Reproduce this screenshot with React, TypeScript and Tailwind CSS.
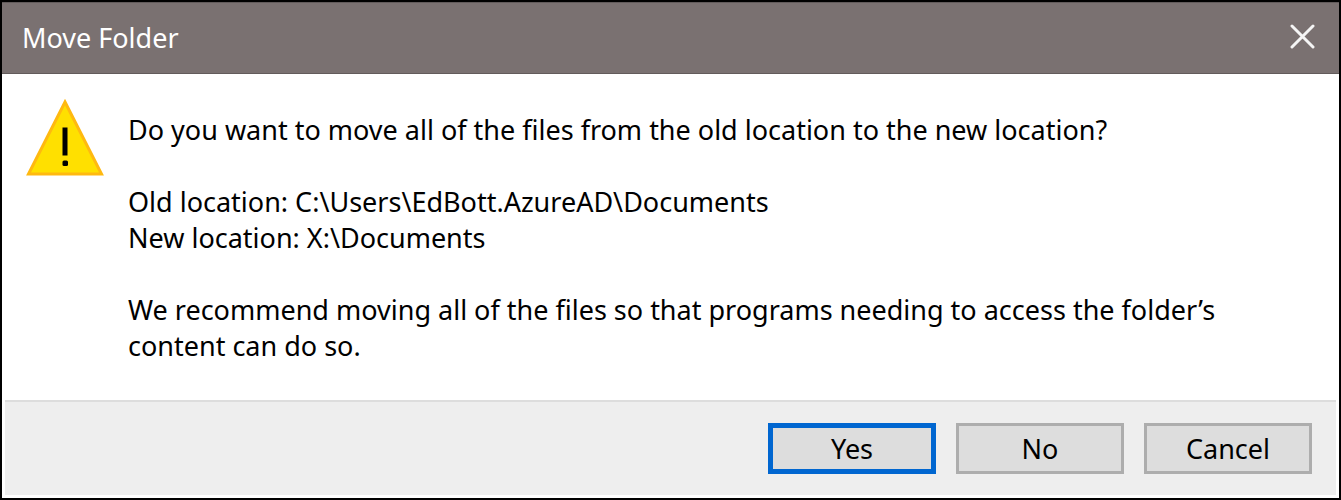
import React from "react";

const buttonBase =
  "h-[51px] w-[168px] bg-[#dddddd] text-[27px] leading-9 text-black";

export default function App() {
  return (
    <main
      role="dialog"
      aria-labelledby="title"
      className="flex min-h-screen flex-col border-2 border-black bg-white font-['Noto_Sans','Open_Sans',sans-serif] text-black"
    >
      <header className="flex h-[72px] items-center justify-between border-y border-[#625b5b] bg-[#7a7171] px-5 text-white">
        <h1 id="title" className="text-[27px] leading-9">Move Folder</h1>
        <button type="button" aria-label="Close" className="grid size-8 place-items-center">
          <svg width="28" height="28" viewBox="0 0 28 28" fill="none" stroke="#f5f5f5" strokeWidth="3" strokeLinecap="round" aria-hidden="true">
            <path d="M3 2 24 23M24 2 3 23" />
          </svg>
        </button>
      </header>
      <section className="flex flex-1 gap-6 px-6 pt-6 pb-8">
        <svg className="shrink-0" width="78" height="78" viewBox="0 0 78 78" aria-hidden="true">
          <path d="M39 4 75.5 76H2.5Z" fill="#ffe000" stroke="#ffb910" strokeWidth="3" />
          <path d="M36.5 29.5h5V57.5h-5Z" fill="#000" />
          <rect x="36.5" y="62.5" width="5.5" height="5.5" rx="1.5" fill="#000" />
        </svg>
        <div className="pt-3.5 text-[27px] leading-9">
          <p>Do you want to move all of the files from the old location to the new location?</p>
          <p className="pt-9">Old location: C:\Users\EdBott.AzureAD\Documents</p>
          <p>New location: X:\Documents</p>
          <p className="pt-9">
            We recommend moving all of the files so that programs needing to access the folder’s
            <br />
            content can do so.
          </p>
        </div>
      </section>
      <footer className="mx-[3px] mb-[3px] flex justify-end gap-5 border-t-2 border-[#dddddd] bg-[#eeeeee] px-6 py-[21px]">
        <button type="button" className={`${buttonBase} border-[5px] border-[#0066d0]`}>Yes</button>
        <button type="button" className={`${buttonBase} border-[3px] border-[#adadad]`}>No</button>
        <button type="button" className={`${buttonBase} border-[3px] border-[#adadad]`}>Cancel</button>
      </footer>
    </main>
  );
}
